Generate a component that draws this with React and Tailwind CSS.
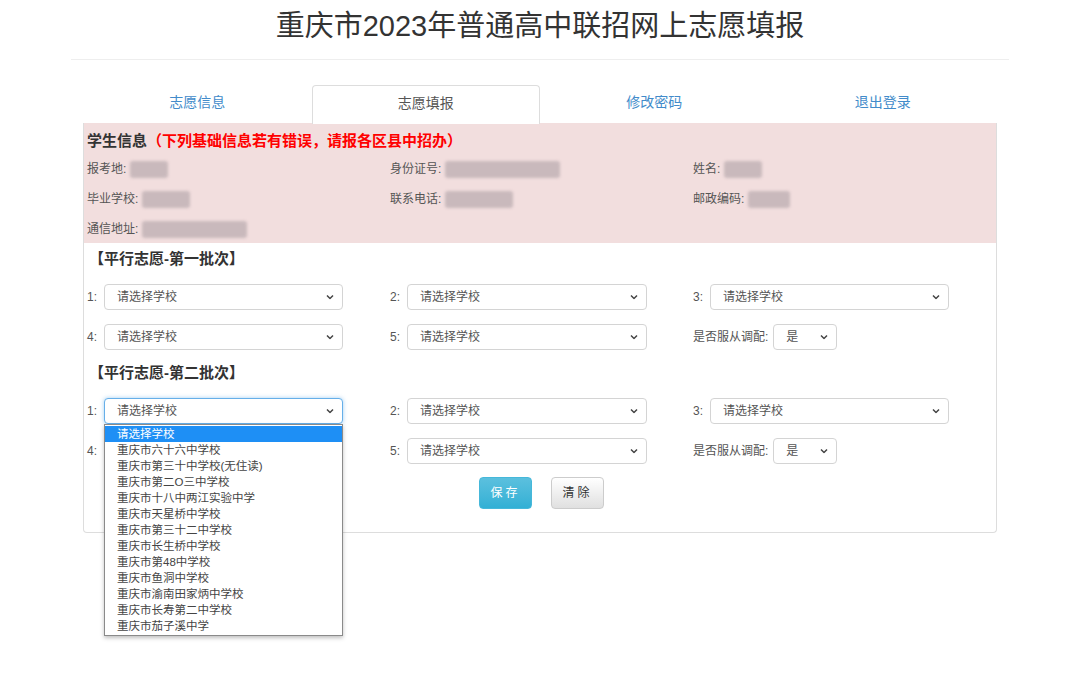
import React from 'react';

const schools = [
  '请选择学校',
  '重庆市六十六中学校',
  '重庆市第三十中学校(无住读)',
  '重庆市第二O三中学校',
  '重庆市十八中两江实验中学',
  '重庆市天星桥中学校',
  '重庆市第三十二中学校',
  '重庆市长生桥中学校',
  '重庆市第48中学校',
  '重庆市鱼洞中学校',
  '重庆市渝南田家炳中学校',
  '重庆市长寿第二中学校',
  '重庆市茄子溪中学',
];

const Chevron = () => (
  <svg
    className="pointer-events-none absolute right-[9px] top-1/2 -translate-y-1/2"
    width="8"
    height="5"
    viewBox="0 0 8 5"
  >
    <path d="M1 1l3 3 3-3" fill="none" stroke="#444" strokeWidth="1.5" />
  </svg>
);

const Select = ({ width = 'w-[239px]', value = '请选择学校', focused = false, children }) => (
  <div className={`relative ${width} h-[26px]`}>
    <div
      className={`flex h-full items-center rounded-[4px] border bg-white pl-[12px] text-[12px] text-[#555] ${
        focused ? 'border-[#66afe9] shadow-[0_0_4px_rgba(102,175,233,0.6)]' : 'border-[#d4d4d4]'
      }`}
    >
      {value}
    </div>
    <Chevron />
    {children}
  </div>
);

const Field = ({ label, children }) => (
  <div className="flex items-center">
    <span className="w-[17px] text-[12px] text-[#555]">{label}</span>
    {children}
  </div>
);

const Blur = ({ w }) => (
  <span
    className={`ml-[4px] inline-block h-[17px] ${w} rounded-[3px] bg-[#c9b9bc] blur-[1.5px]`}
  />
);

const Info = ({ label, w }) => (
  <div className="flex h-[30px] items-center text-[12px] text-[#555]">
    <span>{label}:</span>
    <Blur w={w} />
  </div>
);

const Dropdown = () => (
  <div className="absolute left-0 top-[26px] z-10 w-[239px] border border-[#8a8a8a] bg-white py-[1px] shadow-[0_2px_4px_rgba(0,0,0,0.25)]">
    {schools.map((s, i) => (
      <div
        key={s}
        className={`h-[16px] pl-[12px] text-[11.5px] leading-[16px] ${
          i === 0 ? 'bg-[#1e8ff5] text-white' : 'text-[#444]'
        }`}
      >
        {s}
      </div>
    ))}
  </div>
);

const Batch = ({ title, open }) => (
  <div>
    <h3 className="flex h-[20px] items-center pl-[2px] text-[15px] font-bold text-[#333]">{title}</h3>
    <div className="mt-[15px] grid grid-cols-3 gap-y-[14px]">
      <Field label="1:">
        <Select focused={open}>{open && <Dropdown />}</Select>
      </Field>
      <Field label="2:">
        <Select width="w-[240px]" />
      </Field>
      <Field label="3:">
        <Select />
      </Field>
      <Field label="4:">
        <Select />
      </Field>
      <Field label="5:">
        <Select width="w-[240px]" />
      </Field>
      <div className="flex items-center">
        <span className="mr-[5px] text-[12px] text-[#555]">是否服从调配:</span>
        <Select width="w-[64px]" value="是" />
      </div>
    </div>
  </div>
);

export default function App() {
  const tabs = ['志愿信息', '志愿填报', '修改密码', '退出登录'];
  return (
    <div className="min-h-[689px] bg-white font-['Liberation_Sans','Noto_Sans_CJK_SC',sans-serif]">
      <div className="mx-auto w-[938px] border-b border-[#eeeeee]">
        <h1 className="flex h-[59px] items-center justify-center pb-[5px] text-[29px] text-[#333]">
          重庆市2023年普通高中联招网上志愿填报
        </h1>
      </div>

      <div className="mx-auto mt-[25px] w-[914px]">
        <div className="grid h-[38px] grid-cols-4">
          {tabs.map((t, i) => (
            <div
              key={t}
              className={`flex items-center justify-center pb-[4px] text-[14px] ${
                i === 1
                  ? 'relative z-10 -mb-px rounded-t-[4px] border border-b-0 border-[#dddddd] bg-white text-[#555]'
                  : 'text-[#428bca]'
              }`}
            >
              {t}
            </div>
          ))}
        </div>

        <div className="h-[410px] rounded-b-[4px] border border-t-0 border-[#dddddd]">
          <div className="h-[120px] bg-[#f2dede] pl-[3px] pt-[7px]">
            <h2 className="h-[20px] text-[15px] font-bold text-[#333]">
              学生信息<span className="text-[#ff0000]">（下列基础信息若有错误，请报各区县中招办）</span>
            </h2>
            <div className="mt-[4px] grid grid-cols-3">
              <Info label="报考地" w="w-[38px]" />
              <Info label="身份证号" w="w-[115px]" />
              <Info label="姓名" w="w-[38px]" />
              <Info label="毕业学校" w="w-[48px]" />
              <Info label="联系电话" w="w-[68px]" />
              <Info label="邮政编码" w="w-[42px]" />
              <Info label="通信地址" w="w-[105px]" />
            </div>
          </div>

          <div className="pl-[3px] pt-[6px]">
            <Batch title="【平行志愿-第一批次】" />
            <div className="h-[13px]" />
            <Batch title="【平行志愿-第二批次】" open />
            <div className="mt-[13px] flex justify-center gap-[19px]">
              <button className="h-[32px] w-[53px] rounded-[4px] border border-[#46b8da] bg-gradient-to-b from-[#5bc0de] to-[#31b0d5] text-[12px] tracking-[3px] text-white">
                保存
              </button>
              <button className="h-[32px] w-[53px] rounded-[4px] border border-[#cccccc] bg-gradient-to-b from-[#ffffff] to-[#e0e0e0] text-[12px] tracking-[3px] text-[#333]">
                清除
              </button>
            </div>
          </div>
        </div>
      </div>
    </div>
  );
}
